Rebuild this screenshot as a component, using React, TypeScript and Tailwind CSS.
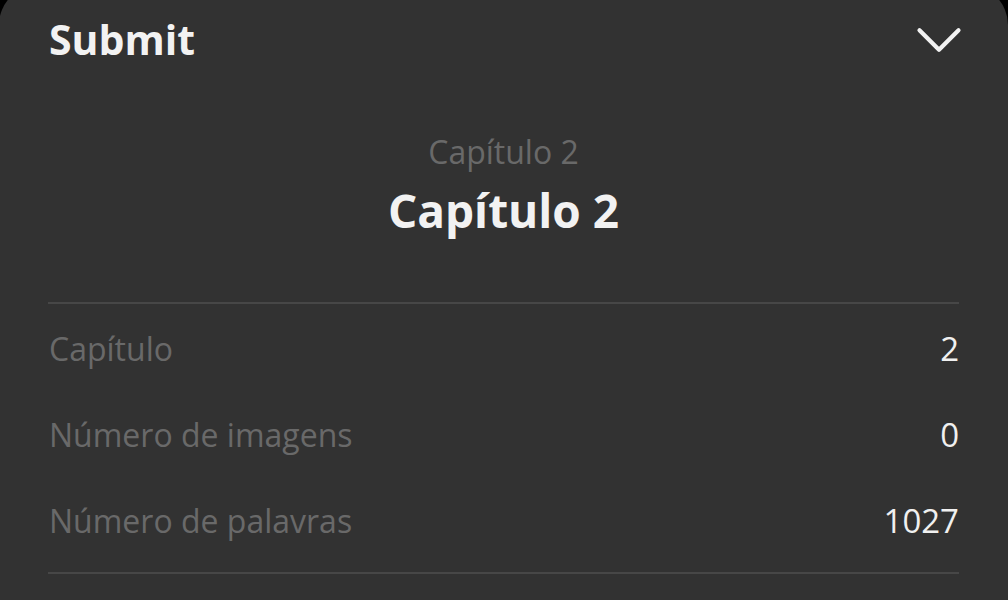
import { ChevronDown } from 'lucide-react';

const rows = [
  { label: 'Capítulo', value: '2' },
  { label: 'Número de imagens', value: '0' },
  { label: 'Número de palavras', value: '1027' },
];

export default function App() {
  return (
    <div className="w-[1008px] h-[600px] overflow-hidden bg-black" style={{ fontFamily: '"Open Sans", "Noto Sans", sans-serif' }}>
      <div className="-mt-[15px] -ml-[1px] w-[1009px] h-[615px] rounded-t-[40px] bg-[#323232] pl-[49px] pr-[49px]">
        {/* header */}
        <div className="flex items-center justify-between h-[93px] pt-[15px]">
          <h2 className="text-[41px] font-bold text-[#f2f2f2] leading-none ml-[1px]">Submit</h2>
          <ChevronDown className="w-[78px] h-[78px] text-[#f2f2f2] -mr-[19px] mt-[2px]" strokeWidth={1.3} />
        </div>

        {/* chapter title */}
        <div className="flex flex-col items-center pt-[58px] h-[224px]">
          <div className="text-[32px] leading-none text-[#696969]">Capítulo 2</div>
          <div className="text-[46px] font-bold leading-none text-[#f2f2f2] mt-[19px]">Capítulo 2</div>
        </div>

        <div className="h-[2px] bg-[#474747]" />

        {/* stats */}
        <div className="pt-[2px]">
          {rows.map(row => (
            <div key={row.label} className="flex items-center justify-between h-[86px]">
              <span className="text-[32px] text-[#696969] ml-[1px]">{row.label}</span>
              <span className="text-[33px] text-[#f0f0f0]">{row.value}</span>
            </div>
          ))}
        </div>

        <div className="h-[2px] bg-[#474747] mt-[8px]" />
      </div>
    </div>
  );
}
